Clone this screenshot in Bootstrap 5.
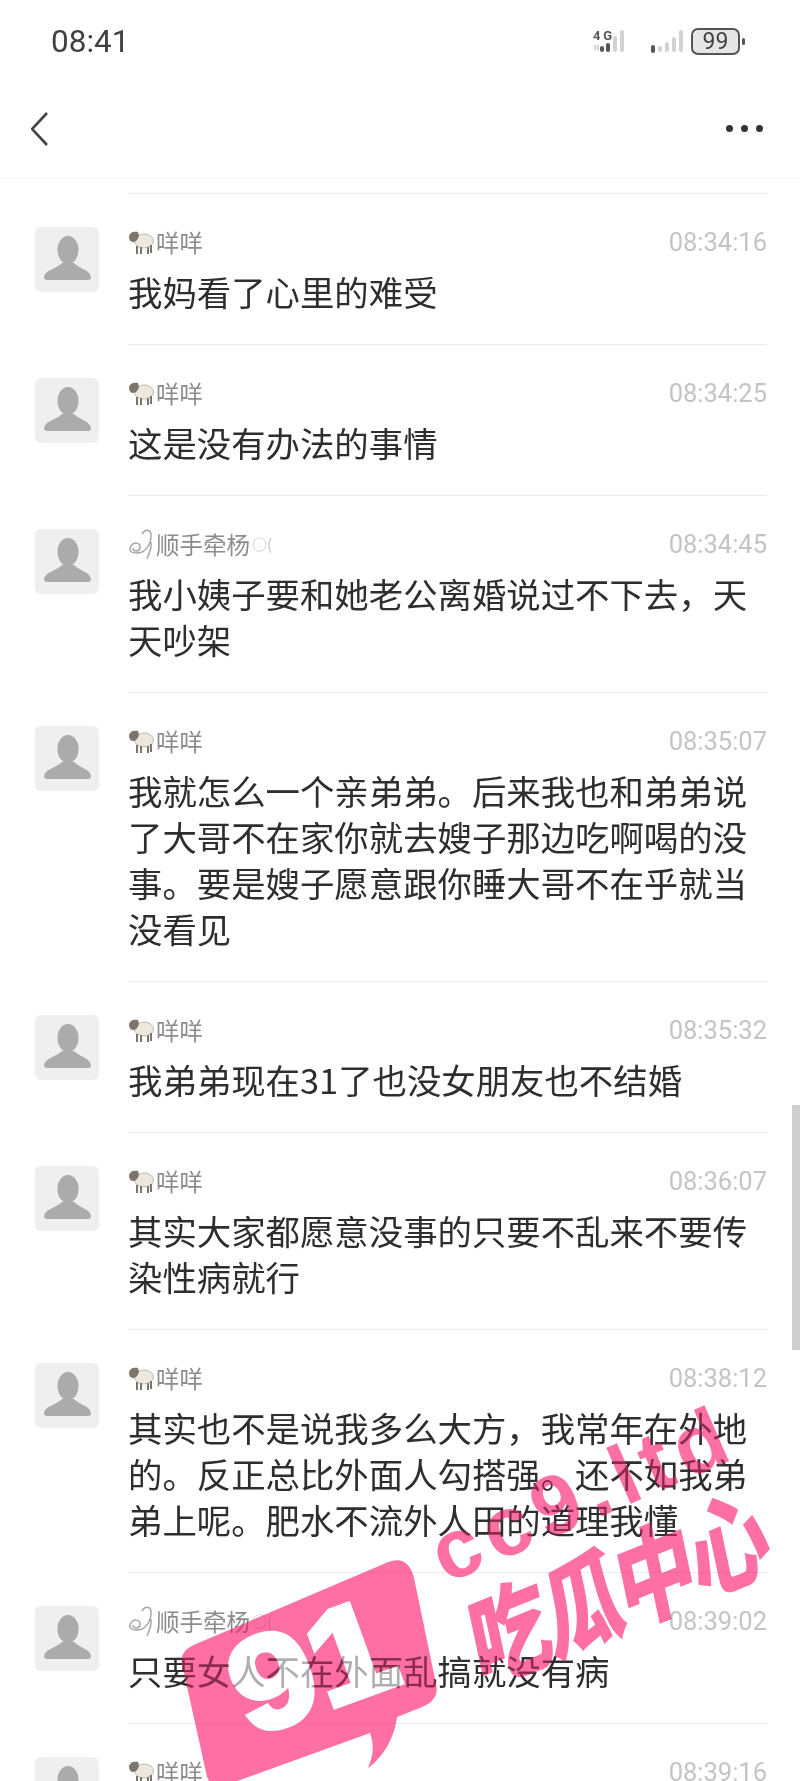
<!DOCTYPE html>
<html lang="zh-CN">
<head>
  <meta charset="UTF-8">
  <meta name="viewport" content="width=device-width, initial-scale=1.0">
  <title>聊天记录</title>
  <link rel="stylesheet" href="https://cdn.jsdelivr.net/npm/bootstrap@5.3.0/dist/css/bootstrap.min.css">
<style>
body { background: #fff; font-family: "Noto Sans CJK SC", sans-serif; }
.phone-page { position: relative; width: 800px; height: 1781px; overflow: hidden; background: #fff; }
.page-soft { filter: blur(0.5px); }

.status-row { height: 84px; padding: 0 54px 0 51px; }
.status-time { font: 400 31.5px/1 Roboto, sans-serif; color: #404040; }
.top-nav { height: 94px; padding: 0 37px 4px 31px; border-bottom: 1px solid #f6f6f6; margin-bottom: 15px; }
.more-dot { width: 7px; height: 7px; border-radius: 50%; background: #333; }

.avatar-col { width: 128px; padding: 34px 0 0 35px; flex: none; }
.avatar-box { width: 64px; height: 65px; border-radius: 6px; background: #efefef; }
.msg-col { width: 639px; flex: none; border-top: 1px solid #ececec; padding: 33px 0 30px; }
.name-line { height: 30px; font-size: 23.5px; line-height: 30px; color: #8c8c8c; }
.name-line svg { flex: none; margin-right: 2px; }
.name-tail { font-size: 15px; color: #c4c4c4; margin-left: 2px; }
.stamp { font: 400 25.5px/30px Roboto, sans-serif; color: #c4c4c4; }
.msg-text { margin: 11px 0 0; font-size: 34.4px; line-height: 46px; color: #2e2e2e; }

.scroll-thumb { position: absolute; right: 0; top: 1105px; width: 8px; height: 245px; background: #cfcfcf; }

.mark-layer { position: absolute; left: 0; top: 0; width: 800px; height: 1781px; }
.mark-tint { fill: #fd6fa5; opacity: 0.45; }
.mark-mult { fill: #ff95c4; mix-blend-mode: multiply; }
.mark-white { fill: #fff; stroke: #fff; stroke-width: 6; opacity: 0.62; }
.t-num { font: 700 132px "Liberation Sans", sans-serif; }
.t-url { font: 700 84px "Liberation Sans", sans-serif; letter-spacing: 8px; }
.t-cn { font: 900 82px "Noto Sans CJK SC", sans-serif; }
</style>
</head>
<body class="m-0">

<div class="phone-page">
  <svg width="0" height="0" class="position-absolute">
    <defs>
      <symbol id="i-person" viewBox="0 0 64 65">
        <ellipse cx="33" cy="23" rx="10.5" ry="14" fill="#ababab"/>
        <path d="M9 50C10 43 21 42 27 36H39C45 42 55 43 56 50 56 52 55 53 53 53H12C10 53 9 52 9 50Z" fill="#ababab"/>
      </symbol>
      <symbol id="i-sheep" viewBox="0 0 26 26">
        <ellipse cx="16" cy="12" rx="9.5" ry="7" fill="#ece8de" stroke="#bdb8ac"/>
        <path d="M10 3C5 2 1 4 1 8 1 11 3 13 5 13 8 13 10 10 11 7Z" fill="#7d756a"/>
        <path d="M9 17V25M13 18V25M20 18V25M23 16V24" stroke="#7d756a" stroke-width="2" fill="none"/>
      </symbol>
      <symbol id="i-swirl" viewBox="0 0 26 32">
        <path d="M2 20C5 13 13 14 12 20 11 24 5 24 5 20M2 20C1 25 8 26 14 24 20 21 24 13 23 6 22 1 17 1 14 6M23 14C24 20 21 26 19 31" fill="none" stroke="#a6a6a6" stroke-width="1.5"/>
      </symbol>
      <g id="mark-shapes" mask="url(#hole-91)">
        <path d="M196 1644 386 1563C402 1556 410 1563 414 1578L436 1684C439 1696 432 1703 422 1707L397 1717C394 1740 382 1758 368 1768 374 1754 374 1744 370 1733L226 1785C214 1789 208 1784 206 1772L182 1664C180 1654 186 1648 196 1644Z"/>
      </g>
      <g id="mark-words">
        <text class="t-url" transform="translate(446 1584) rotate(-23.5)">cc9.ltd</text>
        <text class="t-cn" transform="translate(480 1686) rotate(-22) skewX(-10) scale(1 1.25)" textLength="318">吃瓜中心</text>
      </g>
      <mask id="hole-91" maskUnits="userSpaceOnUse" x="0" y="0" width="800" height="1781">
        <rect width="800" height="1781" fill="#fff"/>
        <text class="t-num" transform="translate(250 1737) rotate(-20) scale(1.12 1)" fill="#000" stroke="#000" stroke-width="6">91</text>
      </mask>
    </defs>
  </svg>

  <div class="page-soft">
    <div class="status-row d-flex align-items-center justify-content-between">
      <span class="status-time">08:41</span>
      <svg width="153" height="30" viewBox="0 0 153 30">
        <text x="0" y="13" font-family="Roboto, sans-serif" font-weight="700" font-size="13" fill="#555" textLength="19">4G</text>
        <g fill="#d2d2d2">
          <rect x="1" y="18" width="2" height="5"/><rect x="4" y="18" width="2" height="5"/>
          <rect x="20" y="9" width="4" height="16" rx="2"/><rect x="27" y="3" width="4" height="22" rx="2"/>
          <rect x="72" y="15" width="4" height="10" rx="2"/><rect x="79" y="10" width="4" height="15" rx="2"/><rect x="86" y="3" width="4" height="22" rx="2"/>
          <rect x="65" y="19" width="4" height="6" rx="2"/>
        </g>
        <g fill="#555">
          <rect x="7" y="19" width="4" height="6" rx="2"/><rect x="13" y="16" width="4" height="9" rx="2"/>
          <rect x="58" y="18" width="4" height="8" rx="2"/>
        </g>
        <rect x="99" y="2" width="47" height="25" rx="6" fill="#e6e6e6" stroke="#555" stroke-width="2"/>
        <text x="122.500" y="22" text-anchor="middle" font-family="Roboto, sans-serif" font-size="23" fill="#444">99</text>
        <rect x="149" y="11" width="3" height="7" rx="1.500" fill="#555"/>
      </svg>
    </div>

    <div class="top-nav d-flex align-items-center justify-content-between">
      <svg width="18" height="34" viewBox="0 0 18 34"><path d="M16 1 1 17 16 33" fill="none" stroke="#444" stroke-width="2.600"/></svg>
      <div class="d-flex gap-2"><span class="more-dot"></span><span class="more-dot"></span><span class="more-dot"></span></div>
    </div>

    <div id="msgList"></div>
  </div>

  <div class="scroll-thumb"></div>

  <svg class="mark-layer mark-tint" viewBox="0 0 800 1781"><use href="#mark-shapes"/><use href="#mark-words"/></svg>
  <svg class="mark-layer mark-mult" viewBox="0 0 800 1781"><use href="#mark-shapes"/><use href="#mark-words"/></svg>
  <svg class="mark-layer" viewBox="0 0 800 1781"><text class="t-num mark-white" transform="translate(250 1737) rotate(-20) scale(1.12 1)">91</text></svg>
</div>

<script src="https://cdn.jsdelivr.net/npm/bootstrap@5.3.0/dist/js/bootstrap.bundle.min.js"></script>
<script>
const MIE = "咩咩", SHUN = "顺手牵杨";
const COMMA = "\uFF0C"; // full-width comma
const messages = [
  { who: MIE, time: "08:34:16", text: "我妈看了心里的难受" },
  { who: MIE, time: "08:34:25", text: "这是没有办法的事情" },
  { who: SHUN, time: "08:34:45", text: `我小姨子要和她老公离婚说过不下去${COMMA}天天吵架` },
  { who: MIE, time: "08:35:07", text: "我就怎么一个亲弟弟。后来我也和弟弟说了大哥不在家你就去嫂子那边吃啊喝的没事。要是嫂子愿意跟你睡大哥不在乎就当没看见" },
  { who: MIE, time: "08:35:32", text: "我弟弟现在31了也没女朋友也不结婚" },
  { who: MIE, time: "08:36:07", text: "其实大家都愿意没事的只要不乱来不要传染性病就行" },
  { who: MIE, time: "08:38:12", text: `其实也不是说我多么大方${COMMA}我常年在外地的。反正总比外面人勾搭强。还不如我弟弟上呢。肥水不流外人田的道理我懂` },
  { who: SHUN, time: "08:39:02", text: "只要女人不在外面乱搞就没有病" },
  { who: MIE, time: "08:39:16", text: "" }
];

// name line differs by sender: sheep emoji or the swirl plus trailing marks
function nameHtml(who) {
  if (who === MIE) {
    return `<svg width="26" height="26"><use href="#i-sheep"/></svg>${who}`;
  }
  return `<svg width="26" height="32"><use href="#i-swirl"/></svg>${who}<span class="name-tail">○(</span>`;
}

document.getElementById("msgList").innerHTML = messages.map((m) => `
  <div class="d-flex">
    <div class="avatar-col"><svg class="avatar-box d-block"><use href="#i-person"/></svg></div>
    <div class="msg-col">
      <div class="d-flex justify-content-between align-items-center">
        <div class="name-line d-flex align-items-center">${nameHtml(m.who)}</div>
        <span class="stamp">${m.time}</span>
      </div>
      <p class="msg-text">${m.text}</p>
    </div>
  </div>`).join("");
</script>
</body>
</html>
